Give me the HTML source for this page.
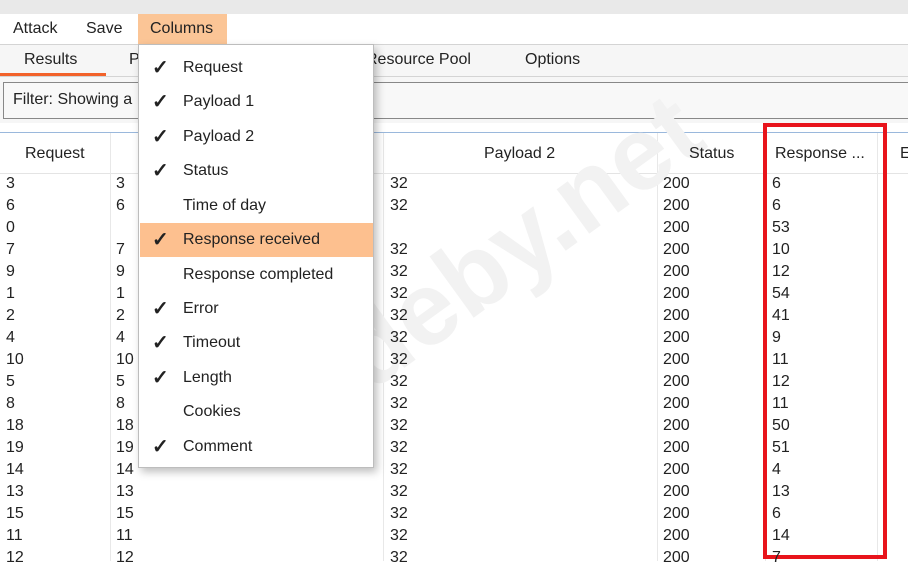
<!DOCTYPE html>
<html><head><style>
*{margin:0;padding:0;box-sizing:border-box}
body{width:908px;height:561px;overflow:hidden;background:#fff;font-family:"Liberation Sans",sans-serif;font-size:16px;color:#222;position:relative}
.a{position:absolute;white-space:nowrap}
.row{position:absolute;left:0;width:908px;height:22px;line-height:22px}
.row span{position:absolute}
.mi{position:absolute;left:1px;width:233px;height:34px;line-height:34px}
.mi .c{position:absolute;left:12px;font-size:20px;font-weight:bold}
.mi .t{position:absolute;left:43px}
</style></head><body>
<div class="a" style="left:0;top:0;width:908px;height:14px;background:#e9e9e9"></div>
<div class="a" style="left:138px;top:14px;width:89px;height:30px;background:#fbc596"></div>
<div class="a" style="left:13px;top:18px;line-height:22px">Attack</div>
<div class="a" style="left:86px;top:18px;line-height:22px">Save</div>
<div class="a" style="left:150px;top:18px;line-height:22px">Columns</div>
<div class="a" style="left:0;top:44px;width:908px;height:33px;background:#f6f6f6;border-top:1px solid #d4d4d4;border-bottom:1px solid #d4d4d4"></div>
<div class="a" style="left:0;top:73px;width:106px;height:3px;background:#f2622a"></div>
<div class="a" style="left:24px;top:49px;line-height:22px">Results</div>
<div class="a" style="left:129px;top:49px;line-height:22px">P</div>
<div class="a" style="left:366px;top:49px;line-height:22px">Resource Pool</div>
<div class="a" style="left:525px;top:49px;line-height:22px">Options</div>
<div class="a" style="left:0;top:77px;width:908px;height:46px;background:#f6f6f6"></div>
<div class="a" style="left:3px;top:82px;width:910px;height:37px;border:1px solid #888;background:#f8f8f8"></div>
<div class="a" style="left:13px;top:89px;line-height:22px">Filter: Showing a</div>
<div class="a" style="left:0;top:132px;width:908px;height:42px;background:#fff;border-top:1px solid #9ab8dc;border-bottom:1px solid #e4e4e4"></div>
<div class="a" style="left:110px;top:133px;width:1px;height:428px;background:#e8e8e8"></div>
<div class="a" style="left:383px;top:133px;width:1px;height:428px;background:#e8e8e8"></div>
<div class="a" style="left:657px;top:133px;width:1px;height:428px;background:#e8e8e8"></div>
<div class="a" style="left:765px;top:133px;width:1px;height:428px;background:#e8e8e8"></div>
<div class="a" style="left:877px;top:133px;width:1px;height:428px;background:#e8e8e8"></div>
<div class="a" style="left:120px;top:222px;font-size:104px;font-weight:bold;color:#f2f2f2;transform:rotate(-36deg);transform-origin:center;width:700px;text-align:center;line-height:110px">codeby.net</div>
<div class="a" style="left:25px;top:143px;line-height:22px">Request</div>
<div class="a" style="left:484px;top:143px;line-height:22px">Payload 2</div>
<div class="a" style="left:689px;top:143px;line-height:22px">Status</div>
<div class="a" style="left:775px;top:143px;line-height:22px">Response ...</div>
<div class="a" style="left:900px;top:143px;line-height:22px">E</div>
<div class="a" style="left:763px;top:123px;width:124px;height:436px;border:4px solid #e8141b"></div>
<div class="a" style="left:138px;top:44px;width:236px;height:424px;background:#fff;border:1px solid #bdbdbd;box-shadow:3px 4px 8px rgba(0,0,0,.25)">
<div class="mi" style="top:6px"><span class="c">✓</span><span class="t">Request</span></div>
<div class="mi" style="top:40px"><span class="c">✓</span><span class="t">Payload 1</span></div>
<div class="mi" style="top:75px"><span class="c">✓</span><span class="t">Payload 2</span></div>
<div class="mi" style="top:109px"><span class="c">✓</span><span class="t">Status</span></div>
<div class="mi" style="top:144px"><span class="t">Time of day</span></div>
<div class="mi" style="top:178px;background:#fdc08f"><span class="c">✓</span><span class="t">Response received</span></div>
<div class="mi" style="top:213px"><span class="t">Response completed</span></div>
<div class="mi" style="top:247px"><span class="c">✓</span><span class="t">Error</span></div>
<div class="mi" style="top:281px"><span class="c">✓</span><span class="t">Timeout</span></div>
<div class="mi" style="top:316px"><span class="c">✓</span><span class="t">Length</span></div>
<div class="mi" style="top:350px"><span class="t">Cookies</span></div>
<div class="mi" style="top:385px"><span class="c">✓</span><span class="t">Comment</span></div>
</div>
<div class="row" style="top:173px"><span style="left:6px">3</span><span style="left:116px">3</span><span style="left:390px">32</span><span style="left:663px">200</span><span style="left:772px">6</span></div>
<div class="row" style="top:195px"><span style="left:6px">6</span><span style="left:116px">6</span><span style="left:390px">32</span><span style="left:663px">200</span><span style="left:772px">6</span></div>
<div class="row" style="top:217px"><span style="left:6px">0</span><span style="left:663px">200</span><span style="left:772px">53</span></div>
<div class="row" style="top:239px"><span style="left:6px">7</span><span style="left:116px">7</span><span style="left:390px">32</span><span style="left:663px">200</span><span style="left:772px">10</span></div>
<div class="row" style="top:261px"><span style="left:6px">9</span><span style="left:116px">9</span><span style="left:390px">32</span><span style="left:663px">200</span><span style="left:772px">12</span></div>
<div class="row" style="top:283px"><span style="left:6px">1</span><span style="left:116px">1</span><span style="left:390px">32</span><span style="left:663px">200</span><span style="left:772px">54</span></div>
<div class="row" style="top:305px"><span style="left:6px">2</span><span style="left:116px">2</span><span style="left:390px">32</span><span style="left:663px">200</span><span style="left:772px">41</span></div>
<div class="row" style="top:327px"><span style="left:6px">4</span><span style="left:116px">4</span><span style="left:390px">32</span><span style="left:663px">200</span><span style="left:772px">9</span></div>
<div class="row" style="top:349px"><span style="left:6px">10</span><span style="left:116px">10</span><span style="left:390px">32</span><span style="left:663px">200</span><span style="left:772px">11</span></div>
<div class="row" style="top:371px"><span style="left:6px">5</span><span style="left:116px">5</span><span style="left:390px">32</span><span style="left:663px">200</span><span style="left:772px">12</span></div>
<div class="row" style="top:393px"><span style="left:6px">8</span><span style="left:116px">8</span><span style="left:390px">32</span><span style="left:663px">200</span><span style="left:772px">11</span></div>
<div class="row" style="top:415px"><span style="left:6px">18</span><span style="left:116px">18</span><span style="left:390px">32</span><span style="left:663px">200</span><span style="left:772px">50</span></div>
<div class="row" style="top:437px"><span style="left:6px">19</span><span style="left:116px">19</span><span style="left:390px">32</span><span style="left:663px">200</span><span style="left:772px">51</span></div>
<div class="row" style="top:459px"><span style="left:6px">14</span><span style="left:116px">14</span><span style="left:390px">32</span><span style="left:663px">200</span><span style="left:772px">4</span></div>
<div class="row" style="top:481px"><span style="left:6px">13</span><span style="left:116px">13</span><span style="left:390px">32</span><span style="left:663px">200</span><span style="left:772px">13</span></div>
<div class="row" style="top:503px"><span style="left:6px">15</span><span style="left:116px">15</span><span style="left:390px">32</span><span style="left:663px">200</span><span style="left:772px">6</span></div>
<div class="row" style="top:525px"><span style="left:6px">11</span><span style="left:116px">11</span><span style="left:390px">32</span><span style="left:663px">200</span><span style="left:772px">14</span></div>
<div class="row" style="top:547px"><span style="left:6px">12</span><span style="left:116px">12</span><span style="left:390px">32</span><span style="left:663px">200</span><span style="left:772px">7</span></div>
</body></html>
